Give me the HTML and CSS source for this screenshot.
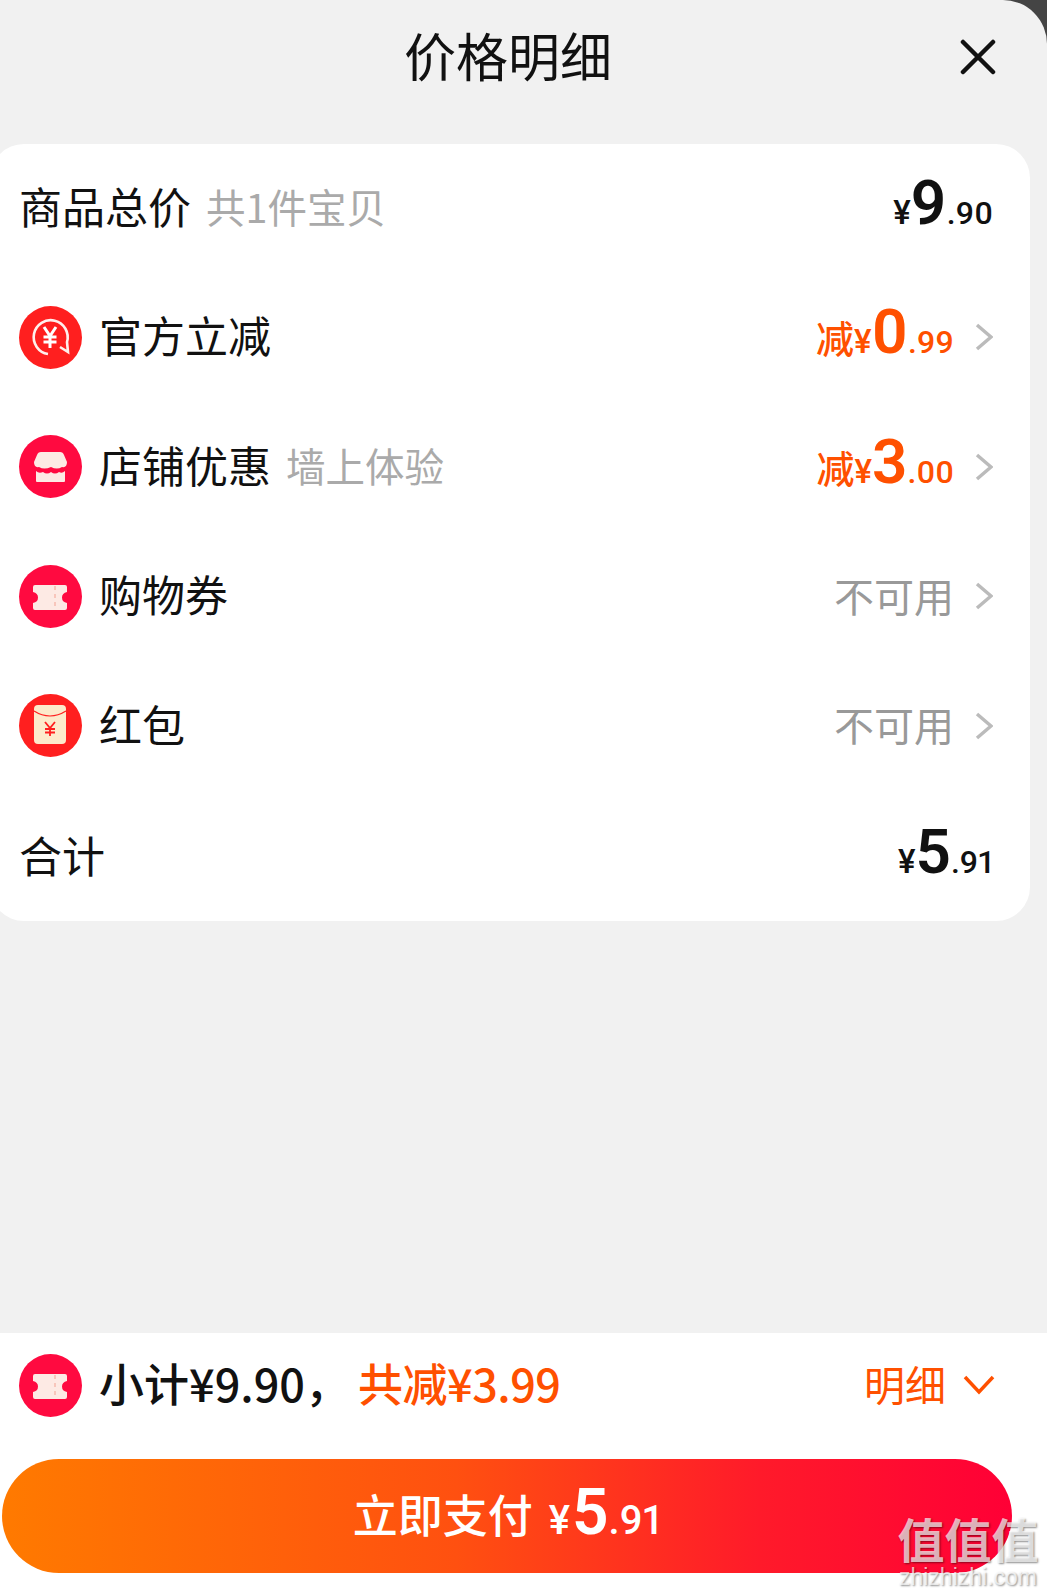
FILE: index.html
```html
<!DOCTYPE html>
<html lang="zh-CN">
<head>
  <meta charset="UTF-8" />
  <meta name="viewport" content="width=device-width, initial-scale=1.0" />
  <title>价格明细</title>
  <link rel="stylesheet" href="styles.css">
</head>
<body>
  <div class="sheet">
    <header class="header">
      <h1 class="title">价格明细</h1>
      <svg class="close" viewBox="0 0 36 36"><path d="M3 3L33 33M33 3L3 33" /></svg>
    </header>

    <section class="card">
      <div class="row">
        <span class="label">商品总价</span>
        <span class="note">共1件宝贝</span>
        <span class="price"><i>¥</i><b>9</b><em>.90</em></span>
      </div>
      <div class="row">
        <svg class="icon" viewBox="0 0 63 63">
          <circle cx="31.5" cy="31.5" r="31.5" fill="#ff1f1f" />
          <path d="M29 48A17 17 0 1 1 48 36L49 46L41 41" fill="none" stroke="#ffefec" stroke-width="2.6" />
          <path d="M25 21L31 30L37 21M31 30V42M24.500 31H37.500M24.500 36H37.500" fill="none" stroke="#fff" stroke-width="3" />
        </svg>
        <span class="label">官方立减</span>
        <span class="price off"><u>减</u><i>¥</i><b>0</b><em>.99</em></span>
        <svg class="chevron" viewBox="0 0 18 28"><path d="M2 2L16 14L2 26" /></svg>
      </div>
      <div class="row">
        <svg class="icon" viewBox="0 0 63 63">
          <circle cx="31.5" cy="31.5" r="31.5" fill="#ff0a40" />
          <path d="M22 17H41Q44 17 45 20L48 27Q48 33 43 32Q38 35 32 32Q25 35 20 32Q15 33 15 27L18 20Q19 17 22 17Z" fill="#fdeae4" />
          <path d="M17 36Q20 39 24 37Q28 40 32 37Q36 40 40 37Q43 39 46 36V46Q46 47 45 47H18Q17 47 17 46Z" fill="#fdeae4" />
        </svg>
        <span class="label">店铺优惠</span>
        <span class="note">墙上体验</span>
        <span class="price off"><u>减</u><i>¥</i><b>3</b><em>.00</em></span>
        <svg class="chevron" viewBox="0 0 18 28"><path d="M2 2L16 14L2 26" /></svg>
      </div>
      <div class="row">
        <svg class="icon" viewBox="0 0 63 63">
          <circle cx="31.5" cy="31.5" r="31.5" fill="#ff0a40" />
          <path class="ticket" d="M16 20H46Q48 20 48 22V27Q43 28 43 32.500Q43 37 48 38V43Q48 45 46 45H16Q14 45 14 43V38Q19 37 19 32.500Q19 28 14 27V22Q14 20 16 20Z" />
          <path class="perf" d="M36 21V45" />
        </svg>
        <span class="label">购物券</span>
        <span class="muted">不可用</span>
        <svg class="chevron" viewBox="0 0 18 28"><path d="M2 2L16 14L2 26" /></svg>
      </div>
      <div class="row">
        <svg class="icon" viewBox="0 0 63 63">
          <circle cx="31.5" cy="31.5" r="31.5" fill="#ff1f1f" />
          <rect x="15" y="11" width="32" height="39" rx="4" fill="#fdeacb" />
          <path d="M15 17Q31 27 47 17" fill="none" stroke="#ff1f1f" stroke-width="1.200" />
          <path d="M26 28L31 34L36 28M31 34V42M26 35H36M26 38.500H36" fill="none" stroke="#ff1f1f" stroke-width="1.800" />
        </svg>
        <span class="label">红包</span>
        <span class="muted">不可用</span>
        <svg class="chevron" viewBox="0 0 18 28"><path d="M2 2L16 14L2 26" /></svg>
      </div>
      <div class="row">
        <span class="label">合计</span>
        <span class="price"><i>¥</i><b>5</b><em>.91</em></span>
      </div>
    </section>

    <footer class="bar">
      <div class="summary">
        <svg class="icon" viewBox="0 0 63 63">
          <circle cx="31.5" cy="31.5" r="31.5" fill="#ff0a40" />
          <path class="ticket" d="M16 20H46Q48 20 48 22V27Q43 28 43 32.500Q43 37 48 38V43Q48 45 46 45H16Q14 45 14 43V38Q19 37 19 32.500Q19 28 14 27V22Q14 20 16 20Z" />
          <path class="perf" d="M36 21V45" />
        </svg>
        <span class="subtotal">小计¥9.90，</span>
        <span class="saved">共减¥3.99</span>
        <span class="detail">明细</span>
        <svg class="chevron-down" viewBox="0 0 32 20"><path d="M2 2L16 17L30 2" /></svg>
      </div>
      <button class="pay">立即支付 <span class="pay-price"><i>¥</i><b>5</b><em>.91</em></span></button>
      <div class="watermark">
        <span class="wm-logo">值值值</span>
        <span class="wm-url">zhizhizhi.com</span>
      </div>
    </footer>
  </div>
</body>
</html>
```

FILE: styles.css
```css
* {
  box-sizing: border-box;
}
html, body {
  margin: 0;
  height: 100%;
}
body {
  background-color: #444;
  font-family: "Noto Sans CJK SC", "Roboto", sans-serif;
  color: #111;
  overflow: hidden;
}
i, em, u {
  font-style: normal;
  text-decoration: none;
}
.sheet {
  display: flex;
  flex-direction: column;
  height: 1596px;
  background-color: #f1f1f1;
  border-top-right-radius: 44px;
  overflow: hidden;
}
.header {
  display: flex;
  justify-content: center;
  align-items: center;
  position: relative;
  height: 144px;
  padding: 0 31px 34px 0;
}
.title {
  margin: 0;
  font-size: 52px;
  font-weight: 400;
  line-height: 1;
}
.close {
  position: absolute;
  top: 39px;
  right: 51px;
  width: 36px;
  height: 36px;
  fill: none;
  stroke: #111;
  stroke-width: 4.5;
  stroke-linecap: round;
}
.card {
  width: 1040px;
  height: 777px;
  margin-left: -10px;
  padding: 0 37px 0 29px;
  background: white;
  border-radius: 34px;
}
.row {
  display: flex;
  align-items: center;
  height: 129.5px;
}
.row:first-child {
  height: 128.5px;
}
.row:last-child {
  padding-top: 4px;
}
.icon {
  flex: none;
  width: 63px;
  height: 63px;
  margin-right: 17px;
}
.ticket {
  fill: #fdeae4;
}
.perf {
  fill: none;
  stroke: #f8c6bb;
  stroke-width: 2;
  stroke-dasharray: 4 4;
}
.label {
  margin-bottom: 5px;
  font-size: 43px;
  line-height: 1;
}
.note {
  margin-bottom: 5px;
  margin-left: 15px;
  font-size: 39.5px;
  line-height: 1;
  color: #aaa;
}
.muted {
  margin-bottom: 3px;
  margin-left: auto;
  margin-right: 21px;
  font-size: 40px;
  line-height: 1;
  color: #999;
}
.price {
  display: flex;
  align-items: baseline;
  margin-left: auto;
  margin-bottom: 10px;
  font-family: "Roboto", "Noto Sans CJK SC", sans-serif;
  font-variant-numeric: proportional-nums;
  line-height: 1;
}
.price i {
  font-size: 33px;
  font-weight: 500;
  margin-right: 0;
}
.price b {
  font-size: 62px;
  font-weight: 600;
}
.price em {
  font-size: 32px;
  font-weight: 500;
}
.price u {
  font-family: "Noto Sans CJK SC", sans-serif;
  font-size: 38px;
  font-weight: 500;
}
.off {
  color: #ff5000;
  margin-right: 21px;
}
.chevron {
  flex: none;
  width: 18px;
  height: 28px;
  fill: none;
  stroke: #bbb;
  stroke-width: 3.5;
}
.bar {
  position: relative;
  display: flex;
  flex-direction: column;
  margin-top: auto;
  height: 263px;
  background: white;
}
.summary {
  display: flex;
  align-items: center;
  height: 126px;
  padding: 0 52px 22px 19px;
}
.subtotal {
  margin-bottom: 6px;
  font-size: 45px;
  font-weight: 500;
  line-height: 1;
  width: 259px;
}
.saved {
  margin-bottom: 6px;
  font-size: 45px;
  font-weight: 500;
  line-height: 1;
  letter-spacing: -0.5px;
  color: #ff5000;
}
.detail {
  margin-bottom: 4px;
  margin-left: auto;
  font-size: 41px;
  line-height: 1;
  color: #ff5000;
}
.chevron-down {
  flex: none;
  width: 32px;
  height: 20px;
  margin-left: 17px;
  fill: none;
  stroke: #ff5000;
  stroke-width: 3.5;
}
.pay {
  display: flex;
  justify-content: center;
  align-items: center;
  gap: 16px;
  width: 1010px;
  height: 114px;
  margin-left: 2px;
  padding: 0 0 6px;
  border: 0;
  border-radius: 57px;
  background: linear-gradient(90deg, #ff7a00, #ff5010 45%, #ff1a2a 75%, #ff0036);
  color: white;
  font-family: "Noto Sans CJK SC", sans-serif;
  font-size: 45px;
  font-weight: 500;
}
.pay-price {
  display: flex;
  align-items: baseline;
  font-family: "Roboto", sans-serif;
  font-variant-numeric: proportional-nums;
  line-height: 1;
}
.pay-price i {
  font-size: 40px;
  font-weight: 500;
  margin-right: 2px;
}
.pay-price b {
  font-size: 64px;
  font-weight: 600;
}
.pay-price em {
  font-size: 40px;
  font-weight: 500;
}
.watermark {
  position: absolute;
  right: 8px;
  bottom: 8px;
  display: flex;
  flex-direction: column;
  align-items: center;
  width: 142px;
  color: rgba(255, 255, 255, 0.7);
  text-shadow: 1px 1px 2px rgba(0, 0, 0, 0.45);
}
.wm-logo {
  font-size: 47px;
  font-weight: 700;
  line-height: 56px;
  white-space: nowrap;
}
.wm-url {
  font-family: "Liberation Sans", sans-serif;
  font-size: 23px;
  line-height: 22px;
  white-space: nowrap;
}
```
